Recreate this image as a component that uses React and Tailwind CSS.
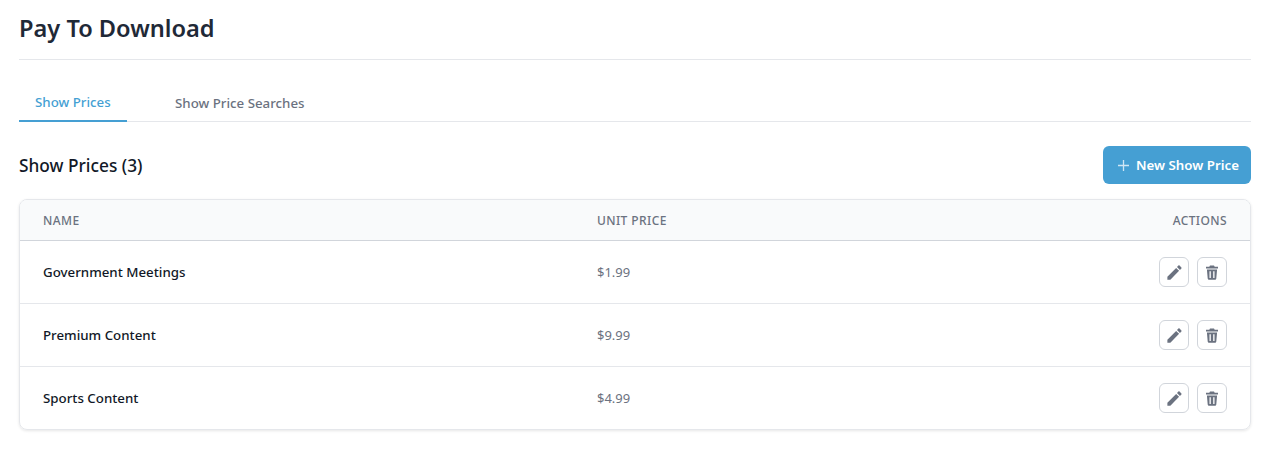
const rows = [
  { name: "Government Meetings", price: "$1.99", h: "h-[63px] border-b border-[#e5e7eb]" },
  { name: "Premium Content", price: "$9.99", h: "h-[63px] border-b border-[#e5e7eb]" },
  { name: "Sports Content", price: "$4.99", h: "h-[62px]" },
];

function Pencil() {
  return (
    <svg width="19" height="19" viewBox="0 0 24 24" fill="#6b7280">
      <path d="M3 17.25V21h3.75L17.81 9.94l-3.75-3.75L3 17.25zM20.71 7.04c.39-.39.39-1.02 0-1.41l-2.34-2.34c-.39-.39-1.02-.39-1.41 0l-1.83 1.83 3.75 3.75 1.83-1.83z" />
    </svg>
  );
}

function Trash() {
  return (
    <svg width="12" height="15" viewBox="0 0 12 15" fill="#6b7280">
      <path d="M4 .5h4l.7 1.2H12v1.8H0V1.7h3.3L4 .5z" />
      <path fillRule="evenodd" d="M.9 4.5h10.2l-.8 9.1a1.3 1.3 0 0 1-1.3 1.2H3a1.3 1.3 0 0 1-1.3-1.2L.9 4.5zM3.5 6.3v6.6h1.3V6.3H3.5zm3.7 0v6.6h1.3V6.3H7.2z" />
    </svg>
  );
}

export default function App() {
  return (
    <div className="bg-white pl-[19px] pr-[18px] pb-[21px] pt-[12px] font-['Noto_Sans','Open_Sans',sans-serif] text-[#111827]">
      <div className="border-b border-[#e5e7eb] pb-[14px]">
        <h1 className="text-[23.6px] leading-[33px] font-semibold text-[#1f2937]">Pay To Download</h1>
      </div>

      <div className="mt-[25px] flex border-b border-[#e5e7eb]">
        <div className="-mb-px h-[37px] w-[108px] border-b-2 border-[#459fd3] pl-[16px] pt-[8px] text-[13.3px] leading-[18px] font-medium text-[#459fd3]">
          Show Prices
        </div>
        <div className="ml-[48px] pt-[9px] text-[13.3px] leading-[18px] font-medium text-[#6b7280]">
          Show Price Searches
        </div>
      </div>

      <div className="mt-[24px] flex items-center justify-between">
        <h2 className="pt-[2px] text-[17.3px] leading-[24px] font-medium text-[#111827]">Show Prices (3)</h2>
        <button className="flex h-[38px] w-[148px] items-center gap-[7px] rounded-[6px] bg-[#459fd3] pl-[15px] pt-[1px] text-[13.3px] font-semibold text-white">
          <svg width="11" height="11" viewBox="0 0 11 11" stroke="#cfe6f4" strokeWidth="1.3">
            <path d="M5.5 0v11M0 5.5h11" />
          </svg>
          New Show Price
        </button>
      </div>

      <div className="mt-[15px] overflow-hidden rounded-[8px] border border-[#e5e7eb] shadow-[0_1px_3px_rgba(0,0,0,0.1)]">
        <div className="grid h-[41px] grid-cols-[554px_1fr_auto] items-center border-b border-[#d1d5db] bg-[#f9fafb] px-[23px] pt-[1px] text-[12px] font-medium tracking-[0.4px] text-[#6b7280]">
          <div>NAME</div>
          <div>UNIT PRICE</div>
          <div>ACTIONS</div>
        </div>
        {rows.map((r) => (
          <div key={r.name} className={`grid grid-cols-[554px_1fr_auto] items-center px-[23px] ${r.h}`}>
            <div className="pt-[1px] text-[13.3px] font-medium text-[#111827]">{r.name}</div>
            <div className="pt-[1px] text-[13px] text-[#6b7280]">{r.price}</div>
            <div className="flex gap-[8px]">
              <button className="flex h-[30px] w-[30px] items-center justify-center rounded-[6px] border border-[#d1d5db] bg-white">
                <Pencil />
              </button>
              <button className="flex h-[30px] w-[30px] items-center justify-center rounded-[6px] border border-[#d1d5db] bg-white">
                <Trash />
              </button>
            </div>
          </div>
        ))}
      </div>
    </div>
  );
}
